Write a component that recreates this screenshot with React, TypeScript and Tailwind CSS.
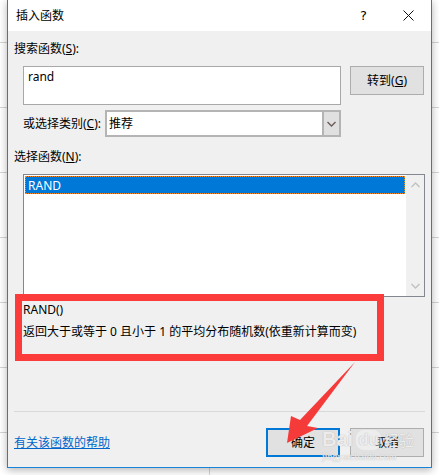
import * as React from "react";

const gridRows = [42, 107, 172, 237, 302, 367, 432];

const Chevron: React.FC<{ up?: boolean; className?: string }> = ({ up, className }) => (
    <svg width="9" height="6" viewBox="0 0 9 6" className={className}>
        <path
            d={up ? "M0.5 5 L4.5 1 L8.5 5" : "M0.5 1 L4.5 5 L8.5 1"}
            fill="none"
            stroke="currentColor"
            strokeWidth="1.4"
        />
    </svg>
);

export default function App() {
    return (
        <div className="relative w-[439px] h-[475px] bg-white overflow-hidden font-['Noto_Sans','Noto_Sans_CJK_SC',sans-serif] text-[12px] text-black">
            {/* spreadsheet grid behind the dialog */}
            {gridRows.map((y) => (
                <div key={y} className="absolute left-0 w-[439px] h-px bg-[#d4d4d4]" style={{ top: y }} />
            ))}
            <div className="absolute left-[209px] top-[468px] w-px h-[10px] bg-[#d4d4d4]" />

            {/* dialog */}
            <div className="relative ml-[7px] w-[425px] h-[468px] border-x border-b border-[#1883d7] bg-[#f0f0f0] flex flex-col shadow-[0_2px_8px_rgba(0,0,0,0.3)]">
                <div className="h-[31px] bg-white flex items-center pl-[8px] pr-[10px]">
                    <span className="text-[12px] leading-[16px]">插入函数</span>
                    <span className="ml-auto mr-[36px] text-[13px] leading-[16px] font-['DejaVu_Sans',sans-serif]">?</span>
                    <svg width="11" height="11" viewBox="0 0 11 11" className="mr-[7px]">
                        <path d="M0.5 0.5 L10.5 10.5 M10.5 0.5 L0.5 10.5" stroke="#111" strokeWidth="1" />
                    </svg>
                </div>

                <div className="mt-[10px] ml-[6px] h-[16px] leading-[16px]">
                    搜索函数(<span className="underline">S</span>):
                </div>

                <div className="mt-[9px] ml-[15px] flex items-start">
                    <div className="w-[318px] h-[39px] bg-white border border-[#a8a8a8] px-[4px] pt-[2px] leading-[16px]">
                        rand
                    </div>
                    <button className="ml-[9px] w-[74px] h-[29px] bg-[#e1e1e1] border border-[#adadad] leading-[16px]">
                        转到(<span className="underline">G</span>)
                    </button>
                </div>

                <div className="mt-[5px] ml-[15px] flex items-center">
                    <span className="w-[82px] leading-[16px]">
                        或选择类别(<span className="underline">C</span>):
                    </span>
                    <div className="w-[236px] h-[27px] flex border-2 border-[#b4b4b4] bg-white">
                        <span className="flex-1 pl-[2px] leading-[23px]">推荐</span>
                        <div className="w-[17px] bg-[#e0e0e0] border-l-2 border-[#b4b4b4] flex items-center justify-center text-[#6d5a5a]">
                            <Chevron />
                        </div>
                    </div>
                </div>

                <div className="mt-[12px] ml-[6px] h-[16px] leading-[16px]">
                    选择函数(<span className="underline">N</span>):
                </div>

                <div className="mt-[9px] ml-[15px] w-[402px] h-[123px] bg-white border border-[#828790] flex">
                    <div className="flex-1 p-px">
                        <div className="h-[18px] bg-[#0078d7] text-white pl-[2px] leading-[17px] border border-dotted border-[#f08a24]">
                            RAND
                        </div>
                    </div>
                    <div className="w-[18px] bg-[#f0f0f0] flex flex-col items-center justify-between py-[7px] text-[#c2c2c2]">
                        <Chevron up />
                        <Chevron />
                    </div>
                </div>

                <div className="mt-[5px] ml-[15px] leading-[16px]">RAND()</div>
                <div className="mt-[6px] ml-[15px] leading-[16px]">
                    返回大于或等于 0 且小于 1 的平均分布随机数(依重新计算而变)
                </div>

                <div className="flex-1" />
                <div className="ml-[6px] w-[411px] h-px bg-[#d9d9d9]" />

                <div className="mt-[16px] mb-[10px] flex items-center">
                    <a className="ml-[6px] text-[#0066cc] underline leading-[16px]">有关该函数的帮助</a>
                    <button className="ml-auto w-[74px] h-[29px] bg-[#e1e1e1] border-2 border-[#0078d7] leading-[16px]">
                        确定
                    </button>
                    <button className="ml-[10px] mr-[7px] w-[74px] h-[29px] bg-[#e1e1e1] border border-[#adadad] leading-[16px]">
                        取消
                    </button>
                </div>
            </div>

            {/* annotation: red frame */}
            <div className="absolute left-[15px] top-[294px] w-[369px] h-[67px] border-[7px] border-[#fc3b3b]" />

            {/* annotation: red arrow */}
            <svg className="absolute left-0 top-0" width="439" height="475" viewBox="0 0 439 475">
                <polygon points="355,362 300,420 291,416 287,443 318,428 307,426" fill="#f53a3a" />
            </svg>

            {/* watermark */}
            <div className="absolute left-[322px] top-[428px] flex items-end text-white/80 font-['Liberation_Sans',sans-serif] font-bold [text-shadow:0_0_1px_#9a9a9a]">
                <span className="text-[20px] leading-[22px]">Bai</span>
                <span className="ml-[3px] text-[17px] leading-[20px] px-[2px] rounded-[8px] bg-white/40">du</span>
                <span className="ml-[3px] text-[15px] leading-[20px] font-['Noto_Sans_CJK_SC',sans-serif] font-normal">经验</span>
            </div>
            <div className="absolute left-[322px] top-[452px] text-[10px] leading-[10px] text-white/80 font-['Liberation_Serif',serif] [text-shadow:0_0_1px_#a0a0a0]">
                jingyan.baidu.com
            </div>
        </div>
    );
}
